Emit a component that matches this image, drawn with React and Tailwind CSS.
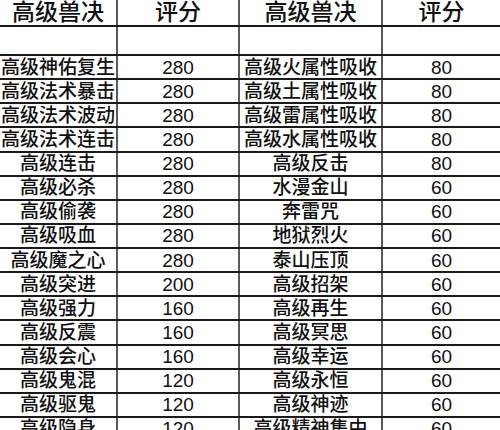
const rows = [
  ['高级神佑复生', '280', '高级火属性吸收', '80'],
  ['高级法术暴击', '280', '高级土属性吸收', '80'],
  ['高级法术波动', '280', '高级雷属性吸收', '80'],
  ['高级法术连击', '280', '高级水属性吸收', '80'],
  ['高级连击', '280', '高级反击', '80'],
  ['高级必杀', '280', '水漫金山', '60'],
  ['高级偷袭', '280', '奔雷咒', '60'],
  ['高级吸血', '280', '地狱烈火', '60'],
  ['高级魔之心', '280', '泰山压顶', '60'],
  ['高级突进', '200', '高级招架', '60'],
  ['高级强力', '160', '高级再生', '60'],
  ['高级反震', '160', '高级冥思', '60'],
  ['高级会心', '160', '高级幸运', '60'],
  ['高级鬼混', '120', '高级永恒', '60'],
  ['高级驱鬼', '120', '高级神迹', '60'],
  ['高级隐身', '120', '高级精神集中', '60'],
]

const cjk = { fontFamily: '"Liberation Sans", "Noto Sans CJK SC", sans-serif' }

function Row({ cells, className }) {
  return (
    <div className={`flex border-b-2 border-[#1a1a1a] ${className}`}>
      <div className="w-[118px] shrink-0 border-r-2 border-[#5a5a5a] flex items-center justify-center whitespace-nowrap">{cells[0]}</div>
      <div className="w-[122px] shrink-0 border-r-2 border-[#5a5a5a] flex items-center justify-center">{cells[1]}</div>
      <div className="w-[143px] shrink-0 border-r-2 border-[#5a5a5a] flex items-center justify-center whitespace-nowrap">{cells[2]}</div>
      <div className="flex-1 flex items-center justify-center">{cells[3]}</div>
    </div>
  )
}

export default function App() {
  return (
    <div className="w-[500px] h-[430px] overflow-hidden bg-white text-[#111] font-medium" style={cjk}>
      {/* header */}
      <Row cells={['高级兽决', '评分', '高级兽决', '评分']} className="h-[27px] text-[23px] leading-none" />
      {/* blank spacer row */}
      <Row cells={['', '', '', '']} className="h-[29px]" />
      {rows.map((r, i) => (
        <Row key={i} cells={r} className="h-[24.13px] text-[19px] leading-none" />
      ))}
    </div>
  )
}
